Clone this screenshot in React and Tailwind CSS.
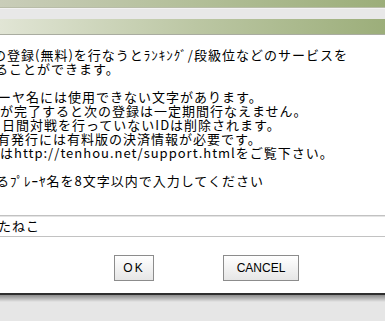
import React from "react";

const jp = { fontFamily: '"Noto Sans CJK JP", "Noto Sans", sans-serif' };

export default function App() {
  return (
    <div className="w-[385px] h-[321px] overflow-hidden bg-[#e6e6e6] flex flex-col" style={jp}>
      <div className="h-[7px] bg-linear-to-r from-[#c9cdb9] via-[#b3bf99] to-[#9cae7a]" />
      <div className="h-px bg-[#b8bca8]" />
      <div className="h-[11px] bg-[#e8e8e8] border-t border-[#f2f2f2]" />
      <div className="h-[15px] bg-linear-to-r from-[#e1e5d5] via-[#bcc7a4] to-[#9cae7a]" />
      <div className="h-px bg-[#a9aca0]" />
      <div className="h-[258px] bg-white flex flex-col overflow-hidden">
        <div className="pt-[13px] text-[13px] leading-[14px] tracking-[1px] text-black whitespace-nowrap">
          <div className="-ml-[7px]">の登録(無料)を行なうとﾗﾝｷﾝｸﾞ/段級位などのサービスを</div>
          <div className="-ml-[5px]">ることができます。</div>
          <div className="h-[14px]" />
          <div className="-ml-[2px]">ーヤ名には使用できない文字があります。</div>
          <div>が完了すると次の登録は一定期間行なえません。</div>
          <div className="ml-[2px]">日間対戦を行っていないIDは削除されます。</div>
          <div className="-ml-[3px]">有発行には有料版の決済情報が必要です。</div>
          <div>はhttp://tenhou.net/support.htmlをご覧下さい。</div>
          <div className="h-[14px]" />
          <div className="-ml-[4px]">るﾌﾟﾚｰﾔ名を8文字以内で入力してください</div>
        </div>
        <div className="mt-[27px] h-[22px] border-y border-[#c2c2c2] shadow-[inset_0_1px_0_#e4e4e4] flex items-center text-[13px] tracking-[1px] text-black -ml-[2px]">
          たねこ
        </div>
        <div className="mt-[18px] flex">
          <button className="ml-[114px] w-[40px] h-[26px] border border-[#8c8c8c] bg-linear-to-b from-white to-[#e6e6e6] text-[12px] tracking-[2px] text-black flex items-center justify-center" style={{ fontFamily: '"Liberation Sans", sans-serif' }}>
            OK
          </button>
          <button className="ml-[69px] w-[76px] h-[26px] border border-[#8c8c8c] bg-linear-to-b from-white to-[#e6e6e6] text-[12px] text-black flex items-center justify-center" style={{ fontFamily: '"Liberation Sans", sans-serif' }}>
            CANCEL
          </button>
        </div>
      </div>
      <div className="h-[2px] bg-[#2e2e2e]" />
      <div className="h-[7px] bg-linear-to-b from-[#8c8c8c] to-[#e6e6e6]" />
      <div className="flex-1 bg-[#e6e6e6]" />
    </div>
  );
}
